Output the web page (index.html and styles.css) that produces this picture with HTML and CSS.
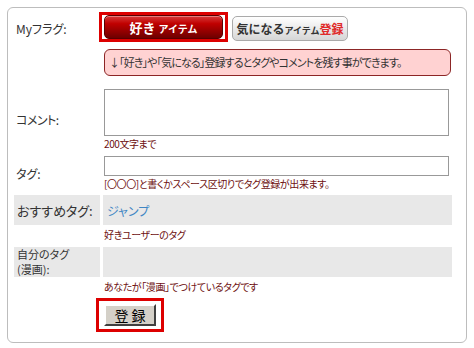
FILE: index.html
```html
<!DOCTYPE html>
<html lang="ja">
<head>
    <meta charset="UTF-8">
    <title>タグ登録</title>
    <link rel="stylesheet" href="styles.css">
</head>
<body>
    <div class="card">
        <div class="row row-flag">
            <div class="label label-top">Myフラグ:</div>
            <div class="value">
                <div class="flag-buttons">
                    <span class="marked mark-like"><button class="btn-like">好き <small>アイテム</small></button></span>
                    <button class="btn-want">気になる<small>アイテム</small><em>登録</em></button>
                </div>
                <div class="notice">↓「好き」や「気になる」登録するとタグやコメントを残す事ができます。</div>
            </div>
        </div>

        <div class="row row-comment">
            <div class="label">コメント:</div>
            <div class="value">
                <textarea class="comment"></textarea>
                <div class="hint">200文字まで</div>
            </div>
        </div>

        <div class="row row-tag">
            <div class="label">タグ:</div>
            <div class="value">
                <input type="text" class="tag-input">
                <div class="hint">[〇〇〇]と書くかスペース区切りでタグ登録が出来ます。</div>
            </div>
        </div>

        <div class="row row-gray">
            <div class="label">おすすめタグ:</div>
            <div class="value"><a href="#" class="tag-link">ジャンプ</a></div>
        </div>
        <div class="hint hint-row">好きユーザーのタグ</div>

        <div class="row row-gray">
            <div class="label label-two">自分のタグ<br>(漫画):</div>
            <div class="value"></div>
        </div>
        <div class="hint hint-row">あなたが「漫画」でつけているタグです</div>

        <div class="submit-row">
            <span class="marked mark-submit"><button class="btn-submit">登 録</button></span>
        </div>
    </div>
</body>
</html>
```

FILE: styles.css
```css
body {
    margin: 0;
    padding: 7px;
    font-family: "Noto Sans CJK JP", "DejaVu Sans", sans-serif;
    font-size: 12px;
    color: #333;
    background: #fff;
    font-feature-settings: "palt";
}
.card {
    border: 1px solid #bdbdbd;
    border-radius: 6px;
    padding: 4px 14px 10px 6px;
}
.row {
    display: flex;
    gap: 3px;
}
.label {
    width: 86px;
    flex: none;
    display: flex;
    align-items: center;
    padding-left: 2px;
    box-sizing: border-box;
}
.label-top {
    align-self: flex-start;
    height: 32px;
}
.value {
    flex: 1;
    padding-left: 1px;
}
.flag-buttons {
    display: flex;
    align-items: flex-start;
    gap: 4px;
}
.flag-buttons button {
    font-family: inherit;
    font-weight: bold;
    border-radius: 5px;
    padding: 0;
    cursor: pointer;
    line-height: 1;
    white-space: nowrap;
    display: block;
}
.flag-buttons small {
    font-size: 10px;
}
.marked {
    display: inline-block;
    border: 3px solid #dd0000;
}
.mark-like {
    padding: 0 2px;
    margin-left: -5px;
}
.btn-like {
    width: 119px;
    height: 24px;
    font-size: 13px;
    color: #fff;
    border: 1px solid #5a0000;
    background: linear-gradient(#d83a3a 0%, #c00000 35%, #9a0000 65%, #6e0000 100%);
    box-shadow: inset 0 1px 0 rgba(255, 255, 255, 0.35);
}
.btn-want {
    margin-top: 4px;
    width: 116px;
    height: 25px;
    font-size: 12px;
    color: #333;
    border: 1px solid #aaa;
    background: linear-gradient(#ffffff, #e6e6e6 60%, #d6d6d6);
}
.btn-want small {
    font-size: 9px;
}
.btn-want em {
    font-style: normal;
    color: #e02a2a;
}
.notice {
    margin: 7px 1px 0 0;
    height: 27px;
    box-sizing: border-box;
    border: 1px solid #8c2626;
    border-radius: 6px;
    background: #ffd2d2;
    font-size: 11px;
    letter-spacing: -0.9px;
    line-height: 25px;
    padding-left: 4px;
    white-space: nowrap;
}
.row-comment {
    margin-top: 13px;
}
.row-comment .label {
    letter-spacing: -0.5px;
}
.comment, .tag-input {
    display: block;
    width: 345px;
    box-sizing: border-box;
    border: 1px solid #999;
    margin: 0;
    font-family: inherit;
    resize: none;
}
.comment {
    height: 47px;
}
.tag-input {
    height: 20px;
}
.hint {
    font-size: 10px;
    letter-spacing: -0.4px;
    line-height: 13px;
    color: #6e1010;
    margin-top: 1px;
    white-space: nowrap;
}
.row-tag {
    margin-top: 6px;
}
.row-gray {
    margin-top: 5px;
    height: 30px;
}
.row-gray .label {
    background: #e8e8e8;
    padding-left: 3px;
    font-size: 13px;
}
.row-gray .label-two {
    align-items: flex-start;
    padding-top: 0;
    font-size: 11px;
    line-height: 15px;
}
.row-gray .value {
    background: #e8e8e8;
    display: flex;
    align-items: center;
    padding-left: 4px;
}
.tag-link {
    color: #3f86c4;
    text-decoration: none;
}
.hint-row {
    margin: 3px 0 0 90px;
    line-height: 14px;
}
.submit-row {
    margin: 4px 0 0 82px;
}
.mark-submit {
    padding: 3px 5px;
}
.btn-submit {
    display: block;
    width: 52px;
    height: 22px;
    padding: 0;
    font-family: inherit;
    font-size: 14px;
    line-height: 1;
    color: #000;
    background: #d4d0c8;
    border: 2px solid;
    border-color: #fff #404040 #404040 #fff;
    cursor: pointer;
}
```
